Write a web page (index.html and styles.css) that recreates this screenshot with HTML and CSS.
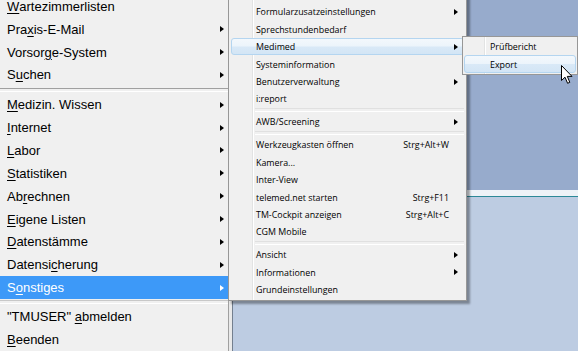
FILE: index.html
```html
<!DOCTYPE html>
<html lang="de">
<head>
    <meta charset="UTF-8">
    <title>Sonstiges Menü</title>
    <link rel="stylesheet" href="styles.css">
</head>
<body>

<div class="desk">
    <div class="main-menu">
        <ul class="main-list">
            <li class="item"><u>W</u>artezimmerlisten</li>
            <li class="item sub">Pra<u>x</u>is-E-Mail</li>
            <li class="item sub">Vorsor<u>g</u>e-System</li>
            <li class="item sub">S<u>u</u>chen</li>
            <li class="sep"></li>
            <li class="item sub"><u>M</u>edizin. Wissen</li>
            <li class="item sub"><u>I</u>nternet</li>
            <li class="item sub"><u>L</u>abor</li>
            <li class="item sub"><u>S</u>tatistiken</li>
            <li class="item sub">Ab<u>r</u>echnen</li>
            <li class="item sub"><u>E</u>igene Listen</li>
            <li class="item sub"><u>D</u>atenstämme</li>
            <li class="item sub">Datensi<u>c</u>herung</li>
            <li class="item sub active">S<u>o</u>nstiges</li>
            <li class="sep sep-low"></li>
            <li class="item">"TMUSER" <u>a</u>bmelden</li>
            <li class="item"><u>B</u>eenden</li>
        </ul>
    </div>
    <div class="frame"></div>
    <div class="workspace">
        <div class="ws-top"></div>
        <div class="ws-line"></div>
        <div class="ws-bottom"></div>
    </div>
</div>

<!-- Untermenü Sonstiges -->
<ul class="popup popup-sonstiges">
    <li class="pitem sub">Formularzusatzeinstellungen</li>
    <li class="pitem">Sprechstundenbedarf</li>
    <li class="pitem sub hover">Medimed</li>
    <li class="pitem">Systeminformation</li>
    <li class="pitem sub">Benutzerverwaltung</li>
    <li class="pitem">i:report</li>
    <li class="psep"></li>
    <li class="pitem sub">AWB/Screening</li>
    <li class="psep"></li>
    <li class="pitem">Werkzeugkasten öffnen<span class="key">Strg+Alt+W</span></li>
    <li class="pitem">Kamera...</li>
    <li class="pitem">Inter-View</li>
    <li class="pitem">telemed.net starten<span class="key">Strg+F11</span></li>
    <li class="pitem">TM-Cockpit anzeigen<span class="key">Strg+Alt+C</span></li>
    <li class="pitem">CGM Mobile</li>
    <li class="psep"></li>
    <li class="pitem sub">Ansicht</li>
    <li class="pitem sub">Informationen</li>
    <li class="pitem">Grundeinstellungen</li>
</ul>

<!-- Untermenü Medimed -->
<ul class="popup popup-medimed">
    <li class="pitem">Prüfbericht</li>
    <li class="pitem hover">Export</li>
</ul>

<svg class="cursor" width="13" height="20" viewBox="0 0 13 20">
    <path d="M0.5 0.5 L0.5 15.5 L4 12.2 L6.6 18.3 L8.8 17.3 L6.3 11.4 L11 11.4 Z" fill="#fff" stroke="#000" stroke-width="1"/>
</svg>

</body>
</html>
```

FILE: styles.css
```css
/* Grundlayout */
* {
    box-sizing: border-box;
    margin: 0;
    padding: 0;
}

body {
    width: 578px;
    height: 351px;
    overflow: hidden;
    position: relative;
    background-color: #bdcce2;
}

ul {
    list-style: none;
}

.desk {
    display: flex;
    height: 351px;
}

/* Hauptmenü links */
.main-menu {
    width: 229px;
    flex: none;
    background-color: #f0f0f0;
    border-right: 1px solid #a0a0a0;
    font-family: "Liberation Sans", Arial, sans-serif;
    font-size: 13px;
    color: #000;
}

.main-list {
    margin-top: -5px;
}

.item {
    height: 22.85px;
    display: flex;
    align-items: center;
    padding-left: 7px;
    padding-right: 4px;
    white-space: pre;
}

.item u {
    text-underline-offset: 2px;
}

.item.sub::after {
    content: "";
    margin-left: auto;
    border-left: 4px solid #000;
    border-top: 3.5px solid transparent;
    border-bottom: 3.5px solid transparent;
}

.item.active {
    background-color: #3d99f8;
    color: #fff;
}

.item.active::after {
    border-left-color: #fff;
}

.sep {
    height: 7px;
    display: flex;
    flex-direction: column;
    justify-content: center;
}

.sep::before {
    content: "";
    height: 2px;
    border-top: 1px solid #a0a0a0;
    border-bottom: 1px solid #fff;
}

.sep-low {
    height: 6px;
}

.sep-low::before {
    border-top-color: #c8c8c8;
}

/* Fensterrahmen und Arbeitsfläche */
.frame {
    width: 4px;
    flex: none;
    background-color: #e9e9e9;
    border-right: 1px solid #737f8f;
}

.workspace {
    flex: 1;
    display: flex;
    flex-direction: column;
}

.ws-top {
    height: 190px;
    background-color: #97abcc;
}

.ws-line {
    height: 7px;
    background-color: #eef2f7;
    border-bottom: 1px solid #2c8898;
}

.ws-bottom {
    flex: 1;
    background-color: #bdcce2;
}

/* Popup-Menüs */
.popup {
    position: absolute;
    background-color: #f0f0f0;
    border: 1px solid #979797;
    box-shadow: 3px 3px 2px rgba(0, 0, 0, 0.35);
    font-family: "Open Sans", "Noto Sans", sans-serif;
    font-size: 8.9px;
    color: #000;
}

.popup-sonstiges {
    left: 228px;
    top: -10px;
    width: 239px;
    padding: 12.3px 2px 2px 2px;
    background-image: linear-gradient(to right, transparent 23px, #e2e3e3 23px, #e2e3e3 24px, #fff 24px, #fff 25px, transparent 25px);
}

.popup-medimed {
    left: 462px;
    top: 36px;
    width: 116px;
    padding: 1px 1px 1px 1px;
    box-shadow: none;
    background-image: linear-gradient(to right, transparent 21px, #e2e3e3 21px, #e2e3e3 22px, #fff 22px, #fff 23px, transparent 23px);
}

.pitem {
    height: 17.4px;
    display: flex;
    align-items: center;
    padding-left: 24px;
    padding-right: 14px;
    white-space: nowrap;
    border: 1px solid transparent;
    border-radius: 3px;
}

.pitem .key {
    margin-left: auto;
}

.pitem.sub {
    padding-right: 5px;
}

.pitem.sub::after {
    content: "";
    margin-left: auto;
    border-left: 4px solid #000;
    border-top: 3.5px solid transparent;
    border-bottom: 3.5px solid transparent;
}

.pitem.hover {
    border-color: #b4d5f0;
    background: linear-gradient(#f3f8fc 0%, #ecf4fb 48%, #d9e9f7 52%, #d3e5f5 100%);
}

.popup-medimed .pitem {
    padding-left: 25px;
}

.psep {
    height: 5.6px;
    margin-left: 24px;
    display: flex;
    flex-direction: column;
    justify-content: center;
}

.psep::before {
    content: "";
    height: 2px;
    border-top: 1px solid #e0e0e0;
    border-bottom: 1px solid #fff;
}

/* Mauszeiger */
.cursor {
    position: absolute;
    left: 561px;
    top: 65px;
}
```
